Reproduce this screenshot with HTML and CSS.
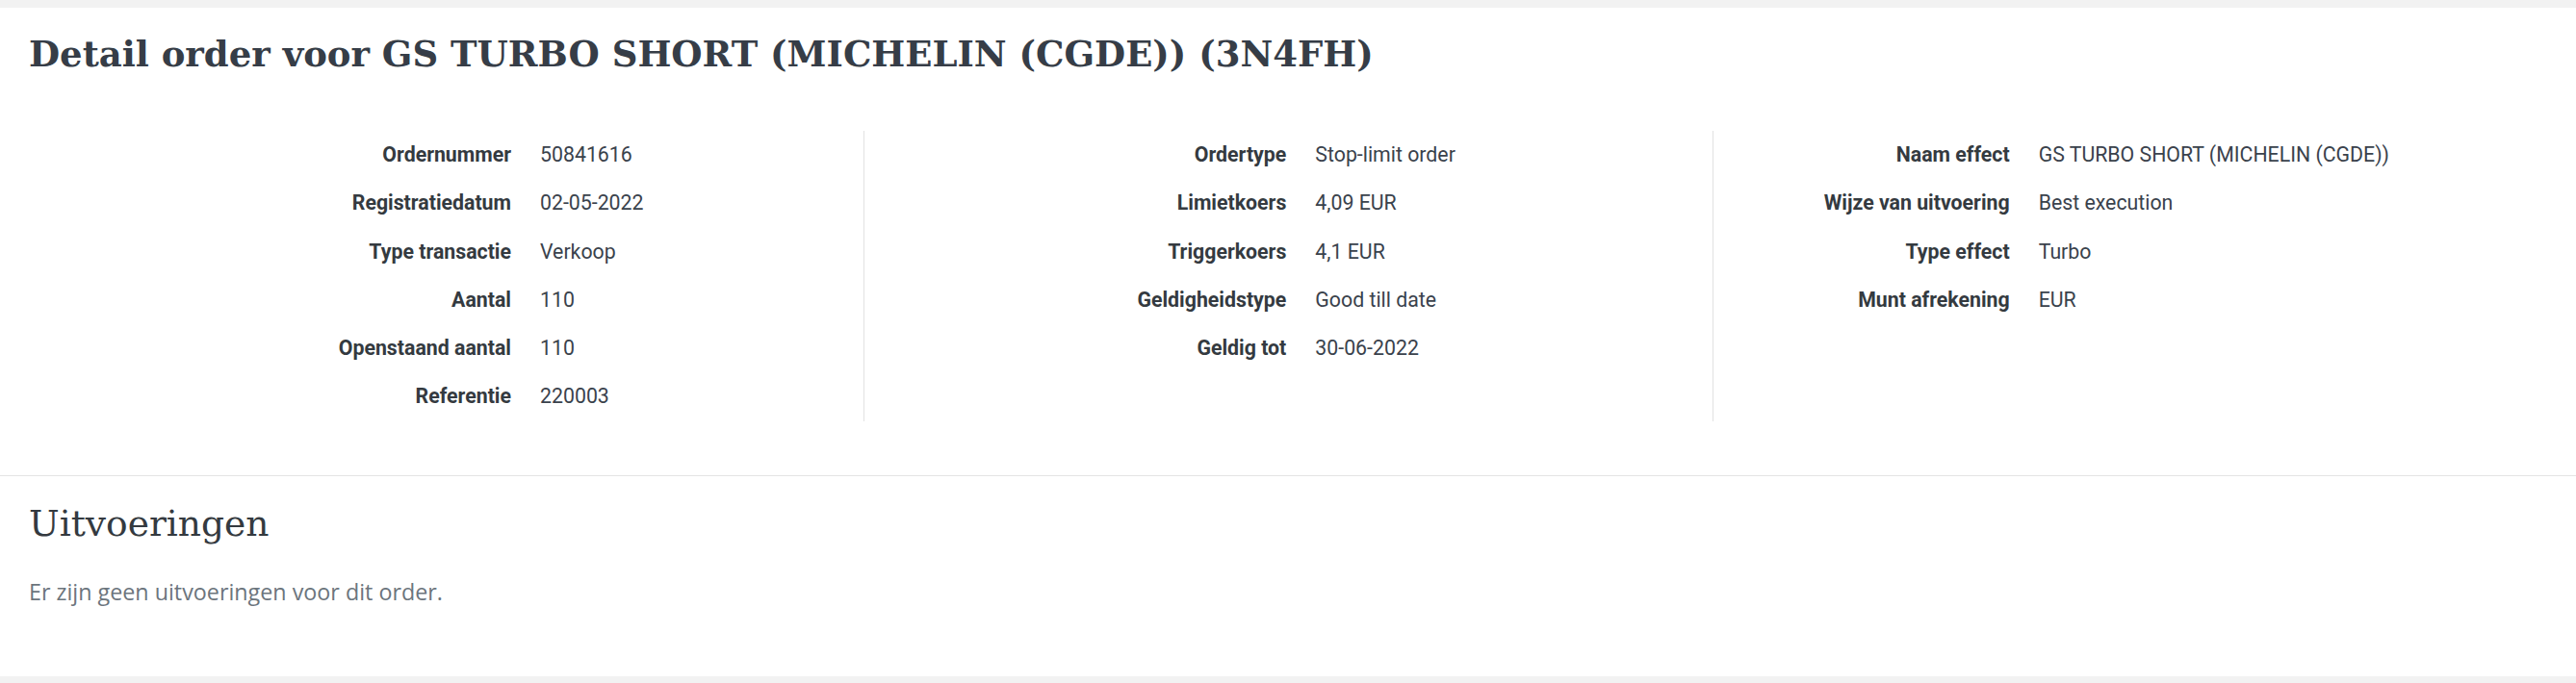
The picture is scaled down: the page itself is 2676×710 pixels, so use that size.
FILE: index.html
```html
<!DOCTYPE html>
<html lang="nl">
<head>
<meta charset="utf-8">
<title>Detail order</title>
<link rel="stylesheet" href="styles.css">
</head>
<body>
<main class="card">
  <section class="order">
    <h1 class="title">Detail order voor GS TURBO SHORT (MICHELIN (CGDE)) (3N4FH)</h1>
    <div class="details">
      <dl class="col col-1">
        <dt>Ordernummer</dt><dd>50841616</dd>
        <dt>Registratiedatum</dt><dd>02-05-2022</dd>
        <dt>Type transactie</dt><dd>Verkoop</dd>
        <dt>Aantal</dt><dd>110</dd>
        <dt>Openstaand aantal</dt><dd>110</dd>
        <dt>Referentie</dt><dd>220003</dd>
      </dl>
      <dl class="col col-2">
        <dt>Ordertype</dt><dd>Stop-limit order</dd>
        <dt>Limietkoers</dt><dd>4,09 EUR</dd>
        <dt>Triggerkoers</dt><dd>4,1 EUR</dd>
        <dt>Geldigheidstype</dt><dd>Good till date</dd>
        <dt>Geldig tot</dt><dd>30-06-2022</dd>
      </dl>
      <dl class="col col-3">
        <dt>Naam effect</dt><dd>GS TURBO SHORT (MICHELIN (CGDE))</dd>
        <dt>Wijze van uitvoering</dt><dd>Best execution</dd>
        <dt>Type effect</dt><dd>Turbo</dd>
        <dt>Munt afrekening</dt><dd>EUR</dd>
      </dl>
    </div>
  </section>
  <section class="executions">
    <h2 class="subtitle">Uitvoeringen</h2>
    <p class="empty">Er zijn geen uitvoeringen voor dit order.</p>
  </section>
</main>
</body>
</html>
```
FILE: styles.css
```css
* { box-sizing: border-box; }

html, body {
  margin: 0;
  padding: 0;
}

body {
  background: #f2f2f2;
  padding: 8px 0 7px;
  font-family: Roboto, "Liberation Sans", sans-serif;
  color: #343a40;
}

.card {
  background: #ffffff;
  height: 695px;
}

.order {
  padding: 26px 16px 56px;
  border-bottom: 1px solid #e4e4e4;
}

.title {
  margin: 0 0 58px;
  padding-left: 14px;
  font-family: "DejaVu Serif", "Liberation Serif", serif;
  font-weight: 700;
  font-size: 37px;
  line-height: 44px;
  color: #363d47;
}

.details {
  display: grid;
  grid-template-columns: repeat(3, 1fr);
}

.col {
  display: grid;
  grid-auto-rows: 50.3px;
  margin: 0;
  align-content: start;
}

.col + .col {
  border-left: 1px solid #e2e2e2;
}

.col-1 { grid-template-columns: 530px 1fr; }
.col-2 { grid-template-columns: 453px 1fr; }
.col-3 { grid-template-columns: 323px 1fr; }

.col dt,
.col dd {
  margin: 0;
  font-size: 21.3px;
  line-height: 50.3px;
  white-space: nowrap;
}

.col dt {
  font-weight: 700;
  text-align: right;
  padding-right: 15px;
  color: #343a40;
}

.col dd {
  font-weight: 400;
  padding-left: 15px;
  color: #3a424c;
}

.executions {
  padding: 27px 30px 0;
}

.subtitle {
  margin: 0 0 33px;
  font-family: "DejaVu Serif", "Liberation Serif", serif;
  font-weight: 400;
  font-size: 37.6px;
  line-height: 44px;
  color: #343a40;
}

.empty {
  margin: 0;
  font-family: "Open Sans", "Liberation Sans", sans-serif;
  font-size: 23.3px;
  line-height: 32px;
  color: #6c757d;
}
```
